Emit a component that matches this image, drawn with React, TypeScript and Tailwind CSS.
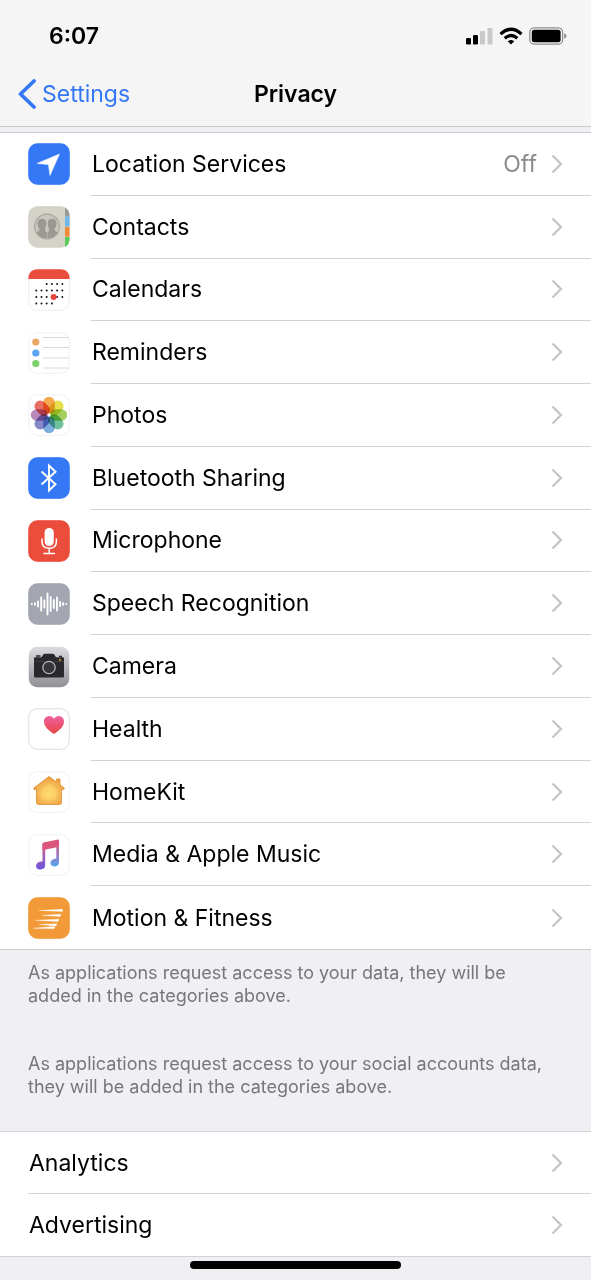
import type { ReactNode } from 'react'

interface PrivacyItem {
  label: string
  icon: ReactNode
  value?: string
}

function Tile({ children, fill = '#ffffff', outline = '#ececee' }: { children: ReactNode; fill?: string; outline?: string }) {
  return (
    <svg viewBox="0 0 42 42" className="size-[42px] shrink-0" aria-hidden="true">
      <rect x="0.75" y="0.75" width="40.5" height="40.5" rx="8.5" fill={fill} stroke={outline} />
      {children}
    </svg>
  )
}

function LocationIcon() {
  return (
    <Tile fill="#3478f6" outline="#3478f6">
      <path d="M31.5 11 L9 20.4 L20.4 21.6 L22 32.5 Z" fill="#fff" stroke="#fff" strokeWidth="0.5" strokeLinejoin="round" />
    </Tile>
  )
}

function ContactsIcon() {
  return (
    <Tile fill="#d5d2ca" outline="#d5d2ca">
      <path d="M37 1.5 Q41.5 4 41.5 10.5 H37 Z" fill="#9b9b96" />
      <path d="M37 10.5 h4.5 v10 h-4.5 Z" fill="#6fb6ea" />
      <path d="M37 21 h4.5 v9.5 h-4.5 Z" fill="#f08a35" />
      <path d="M37 31 h4.5 v1.5 Q41.5 39 37 41 Z" fill="#5bcb58" />
      <circle cx="19" cy="20.5" r="12.4" fill="#c9c6be" stroke="#a9a69f" strokeWidth="1.2" />
      <g fill="#9b9892">
        <path d="M9.5 17.5 Q9.5 12.8 14 12.8 Q18.5 12.8 18.3 17.5 Q18 21 17 22.5 V25 L19 26.5 V32 Q12 32 8.5 26.5 L11.5 24.5 V22.5 Q9.5 21 9.5 17.5 Z" />
        <path d="M28.5 17.5 Q28.5 12.8 24 12.8 Q19.5 12.8 19.7 17.5 Q20 21 21 22.5 V25 L19.6 26.5 V32 Q26 32 29.5 26.5 L26.5 24.5 V22.5 Q28.5 21 28.5 17.5 Z" />
      </g>
    </Tile>
  )
}

function CalendarIcon() {
  const rows = [
    { y: 15, from: 2, to: 5 },
    { y: 21.5, from: 0, to: 5 },
    { y: 28, from: 0, to: 5 },
    { y: 34.5, from: 0, to: 3 },
  ]
  return (
    <Tile>
      <path d="M0.3 10 Q0.3 0.3 10 0.3 H32 Q41.7 0.3 41.7 10 Z" fill="#eb4d3d" />
      {rows.map(({ y, from, to }) =>
        [0, 1, 2, 3, 4, 5]
          .filter((col) => col >= from && col <= to)
          .map((col) => <circle key={`${y}-${col}`} cx={8.3 + col * 5.2} cy={y} r="1" fill="#111" />)
      )}
      <circle cx="25.6" cy="28" r="3" fill="#e8453c" />
    </Tile>
  )
}

function RemindersIcon() {
  return (
    <Tile outline="#f0f0f1">
      <path d="M15 5.5 H41 M15 15.5 H41 M15 26 H41 M15 36 H41" stroke="#d9d9db" />
      <circle cx="7.8" cy="10" r="3.6" fill="#eba566" />
      <circle cx="7.8" cy="21" r="3.6" fill="#5aa5f2" />
      <circle cx="7.8" cy="31.5" r="3.6" fill="#7bd268" />
    </Tile>
  )
}

function PhotosIcon() {
  const petals = ['#f3a03a', '#e6dc3c', '#9bcb4f', '#63bd92', '#6ea4dc', '#7a7cc2', '#b07cb0', '#e85f53']
  return (
    <Tile outline="#f0f0f1">
      {petals.map((color, i) => (
        <rect
          key={color}
          x="15.2"
          y="2.8"
          width="11.6"
          height="17"
          rx="5.8"
          fill={color}
          opacity="0.9"
          style={{ mixBlendMode: 'multiply' }}
          transform={`rotate(${i * 45} 21 21)`}
        />
      ))}
      <circle cx="21" cy="21" r="1.6" fill="#fff" />
    </Tile>
  )
}

function BluetoothIcon() {
  return (
    <Tile fill="#3478f6" outline="#3478f6">
      <path d="M13.5 14.5 L27.5 27.3 L21 33.5 V8.5 L27.5 14.7 L13.5 27.5" fill="none" stroke="#fff" strokeWidth="2" />
    </Tile>
  )
}

function MicrophoneIcon() {
  return (
    <Tile fill="#eb4d3d" outline="#eb4d3d">
      <rect x="16.6" y="8" width="9.2" height="18" rx="4.6" fill="#fff" />
      <path d="M14 18.5 V21.5 Q14 28.3 21.2 28.3 Q28.4 28.3 28.4 21.5 V18.5 M21.2 28.3 V33 M15.5 33.4 H27" fill="none" stroke="#fff" strokeWidth="1.5" />
    </Tile>
  )
}

function SpeechIcon() {
  const bars = [2, 3.5, 7, 15, 9, 23, 16, 10, 15, 6, 3.5, 2]
  return (
    <Tile fill="#a3a6b0" outline="#a3a6b0">
      {bars.map((height, i) => (
        <rect key={i} x={2.8 + i * 3.15} y={21 - height / 2} width="1.9" height={height} rx="0.9" fill="#fff" />
      ))}
    </Tile>
  )
}

function CameraIcon() {
  return (
    <Tile fill="url(#camera-body)" outline="none">
      <defs>
        <linearGradient id="camera-body" x1="0" y1="0" x2="0" y2="1">
          <stop offset="0" stopColor="#dcdce0" />
          <stop offset="1" stopColor="#8f9096" />
        </linearGradient>
      </defs>
      <path d="M6 12.5 Q6 11.3 7.2 11.3 H13.5 L15.5 8.3 Q16 7.8 16.5 7.8 H25 Q25.700 7.8 26 8.3 L28 11.3 H34.8 Q36 11.3 36 12.5 V30.3 Q36 31.5 34.8 31.5 H7.2 Q6 31.5 6 30.3 Z" fill="#29292b" />
      <path d="M8 9.3 h4.500 v1.500 h-4.500 Z M31 9.8 h3 v1.200 h-3 Z" fill="#29292b" />
      <path d="M6 15.500 H36" stroke="#444447" strokeWidth="0.800" />
      <circle cx="21" cy="21.500" r="8" fill="#29292b" />
      <circle cx="21" cy="21.500" r="6.200" fill="#36363a" stroke="#b5b5ba" strokeWidth="1.300" />
      <circle cx="32" cy="14" r="0.900" fill="#e6b63c" />
    </Tile>
  )
}

function HealthIcon() {
  return (
    <Tile outline="#dcdce0">
      <defs>
        <linearGradient id="heart" x1="0" y1="0" x2="0" y2="1">
          <stop offset="0" stopColor="#ee62a0" />
          <stop offset="1" stopColor="#ea4545" />
        </linearGradient>
      </defs>
      <path d="M26 26 C20 22 16 18.500 16 13.500 C16 10.300 18.300 8 21.200 8 C23.300 8 25 9.100 26 10.800 C27 9.100 28.700 8 30.800 8 C33.700 8 36 10.300 36 13.500 C36 18.500 32 22 26 26 Z" fill="url(#heart)" />
    </Tile>
  )
}

function HomeKitIcon() {
  return (
    <Tile outline="#f0f0f1">
      <defs>
        <radialGradient id="house" cx="0.500" cy="0.600" r="0.550">
          <stop offset="0" stopColor="#fde179" />
          <stop offset="1" stopColor="#f0a040" />
        </radialGradient>
      </defs>
      <path d="M21 5.500 L28.500 11 V8 H32 V13.800 L36.500 17.300 L35.500 18.800 L33.500 17.800 V31.500 Q33.500 33.500 31.500 33.500 H10.500 Q8.500 33.500 8.500 31.500 V17.800 L6.500 18.800 L5.500 17.300 Z" fill="url(#house)" stroke="#e09a48" strokeWidth="1" strokeLinejoin="round" />
      <path d="M21 13 L28.500 18.800 V28.500 H13.500 V18.800 Z" fill="#fbd568" opacity="0.500" />
    </Tile>
  )
}

function MusicIcon() {
  return (
    <Tile outline="#f0f0f1">
      <defs>
        <linearGradient id="note-left" x1="0" y1="0" x2="0" y2="1">
          <stop offset="0" stopColor="#d9587c" />
          <stop offset="0.500" stopColor="#a561b8" />
          <stop offset="1" stopColor="#6a52dd" />
        </linearGradient>
        <linearGradient id="note-right" x1="0" y1="0" x2="0" y2="1">
          <stop offset="0" stopColor="#d9587c" />
          <stop offset="0.550" stopColor="#9d7cc6" />
          <stop offset="1" stopColor="#4fa8ee" />
        </linearGradient>
      </defs>
      <path d="M28.300 7.500 L31 7 V28 Q31 32.400 26.800 32.400 Q22.500 32.400 22.500 29 Q22.500 25.200 28.300 24.500 Z" fill="url(#note-right)" />
      <path d="M14.500 10 L17.200 9.500 V31 Q17.200 35.400 12.300 35.400 Q8 35.400 8 32 Q8 28 14.500 27.300 Z" fill="url(#note-left)" />
      <path d="M14.500 9.700 Q14.500 8.900 15.500 8.600 L30 5.500 Q31 5.300 31 6.300 V12.700 L14.500 16.200 Z" fill="#d9587c" />
    </Tile>
  )
}

function MotionIcon() {
  return (
    <Tile fill="#f19a37" outline="#f19a37">
      <path d="M11 13.500 L34.500 12.300 V14.500 Z M14 18.300 L33 17.300 L32 19.600 Z M7.500 23.300 L31 22.200 L30 24.500 Z M11 27.500 L29 26.800 L28 29 Z M5 31.200 L27 29.500 L26 31.700 Z" fill="#fff" stroke="#fff" strokeWidth="0.300" />
    </Tile>
  )
}

const items: PrivacyItem[] = [
  { label: 'Location Services', icon: <LocationIcon />, value: 'Off' },
  { label: 'Contacts', icon: <ContactsIcon /> },
  { label: 'Calendars', icon: <CalendarIcon /> },
  { label: 'Reminders', icon: <RemindersIcon /> },
  { label: 'Photos', icon: <PhotosIcon /> },
  { label: 'Bluetooth Sharing', icon: <BluetoothIcon /> },
  { label: 'Microphone', icon: <MicrophoneIcon /> },
  { label: 'Speech Recognition', icon: <SpeechIcon /> },
  { label: 'Camera', icon: <CameraIcon /> },
  { label: 'Health', icon: <HealthIcon /> },
  { label: 'HomeKit', icon: <HomeKitIcon /> },
  { label: 'Media & Apple Music', icon: <MusicIcon /> },
  { label: 'Motion & Fitness', icon: <MotionIcon /> },
]

const moreItems = ['Analytics', 'Advertising']

function Disclosure() {
  return (
    <svg viewBox="0 0 12 20" className="h-5 w-3 shrink-0" aria-hidden="true">
      <path d="M1.500 1.500 L10 10 L1.500 18.500" fill="none" stroke="#c4c4c8" strokeWidth="2.200" />
    </svg>
  )
}

function StatusBar() {
  return (
    <div className="flex h-[62px] items-center justify-between pt-[10px] pr-6 pl-[49px]">
      <span className="text-[23px] font-semibold">6:07</span>
      <div className="flex items-center gap-[6px]">
        {/* Cell signal */}
        <svg viewBox="0 0 27 18" className="h-[18px] w-[27px]" role="img" aria-label="Signal">
          <rect x="0" y="11" width="5" height="6.500" rx="1.300" />
          <rect x="7" y="8" width="5" height="9.500" rx="1.300" />
          <rect x="14" y="4" width="5" height="13.500" rx="1.300" fill="#c9c9cb" />
          <rect x="21.500" y="1" width="5" height="16.500" rx="1.300" fill="#c9c9cb" />
        </svg>
        {/* Wi-Fi */}
        <svg viewBox="0 0 24 18" className="h-[18px] w-6" role="img" aria-label="Wi-Fi">
          <path d="M1.500 7.200 Q12 -2.700 22.500 7.200 M5.700 11.300 Q12 5.700 18.300 11.300" fill="none" stroke="#000" strokeWidth="3.200" />
          <path d="M12 17.600 L8.700 14.300 Q12 11.800 15.300 14.300 Z" />
        </svg>
        {/* Battery */}
        <svg viewBox="0 0 38 18" className="h-[18px] w-[38px]" role="img" aria-label="Battery">
          <rect x="0.800" y="0.800" width="32.800" height="16.400" rx="4.500" fill="none" stroke="#8e8e90" strokeWidth="1.300" />
          <rect x="2.800" y="2.800" width="28.800" height="12.400" rx="2.500" />
          <path d="M35.200 6.200 Q37.500 7 37.500 9 Q37.500 11 35.200 11.800 Z" fill="#8e8e90" />
        </svg>
      </div>
    </div>
  )
}

export default function App() {
  return (
    <div className="flex min-h-screen flex-col bg-[#efeff4] font-[Inter,'Liberation_Sans',sans-serif] text-[23px] leading-7 text-black">
      <header className="border-b border-[#c9c9cc] bg-[#f5f5f6]">
        <StatusBar />
        <nav className="grid h-16 grid-cols-[1fr_auto_1fr] items-center px-[18px]">
          <button type="button" className="flex items-center gap-[6px] justify-self-start text-[#3478f6]">
            <svg viewBox="0 0 18 30" className="h-[30px] w-[18px]" aria-hidden="true">
              <path d="M16 2 L2.500 15 L16 28" fill="none" stroke="currentColor" strokeWidth="3.800" strokeLinecap="round" strokeLinejoin="round" />
            </svg>
            Settings
          </button>
          <h1 className="font-semibold">Privacy</h1>
        </nav>
      </header>

      <main className="flex flex-1 flex-col pt-[5px]">
        <ul className="grid flex-1 auto-rows-fr border-y border-[#c9c9cd] bg-white">
          {items.map(({ label, icon, value }) => (
            <li key={label} className="group min-h-[60px]">
              <a href="#" className="flex h-full items-center gap-[21px] pl-7">
                {icon}
                <span className="flex h-full flex-1 items-center gap-[14px] border-b border-[#d2d2d5] pr-7 pl-px group-last:border-b-0">
                  <span className="flex-1">{label}</span>
                  {value && <span className="text-[#8a8a8f]">{value}</span>}
                  <Disclosure />
                </span>
              </a>
            </li>
          ))}
        </ul>

        <div className="flex flex-col gap-[45px] pt-[11px] pr-10 pb-[33px] pl-7 text-[18px] leading-[23px] text-[#76767b]">
          <p>As applications request access to your data, they will be added in the categories above.</p>
          <p>As applications request access to your social accounts data, they will be added in the categories above.</p>
        </div>

        <ul className="border-y border-[#d2d2d7] bg-white">
          {moreItems.map((label) => (
            <li key={label} className="group pl-7">
              <a href="#" className="flex h-[62px] items-center border-b border-[#d2d2d5] pr-7 pl-px group-last:border-b-0">
                <span className="flex-1">{label}</span>
                <Disclosure />
              </a>
            </li>
          ))}
        </ul>
      </main>

      {/* Home indicator */}
      <footer className="flex h-[23px] justify-center pt-1">
        <div className="h-2 w-[211px] rounded-full bg-black" />
      </footer>
    </div>
  )
}
